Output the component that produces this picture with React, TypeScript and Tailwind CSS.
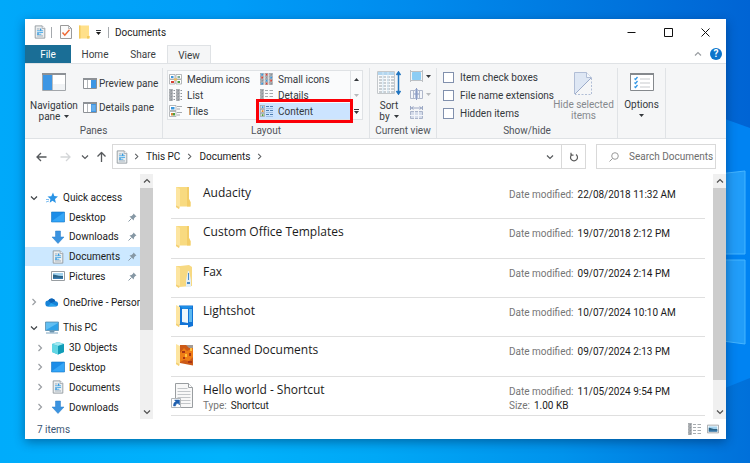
import type { ReactNode } from "react";

type IconProps = { className?: string };

/* ---------- Icons ---------- */

function DocumentIcon({ className = "h-4 w-4" }: IconProps) {
  return (
    <svg viewBox="0 0 16 16" className={className} aria-hidden="true">
      <path d="M2.500 1h8l3 3v11h-11z" fill="#eceff1" stroke="#8f979d" />
      <path d="M10.500 1v3h3" fill="#fff" stroke="#8f979d" strokeWidth=".8" />
      <path d="M4.500 4.500h3M4.500 12.500h7" stroke="#93a5b3" />
      <path d="M4.500 6.500h7M7 8.500h4.500M4.500 10.500h5" stroke="#5ab2ea" strokeWidth="1.200" />
      <path d="M8 4h1.500v2.500H8zM5 8h1.500v3H5z" fill="#3a97d8" />
    </svg>
  );
}

function CheckDocIcon() {
  return (
    <svg viewBox="0 0 12 14" className="h-[14px] w-3" aria-hidden="true">
      <path d="M.5.500h8l3 3v10H.5z" fill="#fbfbfb" stroke="#9a9a9a" />
      <path d="M8.500.500v3h3" fill="none" stroke="#9a9a9a" strokeWidth=".7" />
      <path d="m2.500 7.500 2.300 2.700L9.500 4.800" fill="none" stroke="#ee6a35" strokeWidth="1.500" />
    </svg>
  );
}

function SmallFolderIcon() {
  return (
    <svg viewBox="0 0 12 14" className="h-[14px] w-3" aria-hidden="true">
      <path d="M1 .5h10v10l.8 1-.8 2H1z" fill="#ffe08a" />
      <path d="M1 .5h1.500v13H1zM9 11h2.500v2.500H9z" fill="#f3c95d" />
    </svg>
  );
}

function Caret({ className = "" }: IconProps) {
  return (
    <svg viewBox="0 0 5 3" className={`h-[3px] w-[5px] ${className}`} aria-hidden="true">
      <path d="M0 0h5L2.500 3z" fill="currentColor" />
    </svg>
  );
}

function Chevron({ className = "h-2 w-2" }: IconProps) {
  return (
    <svg viewBox="0 0 8 8" className={className} aria-hidden="true">
      <path d="m2.500 1 3 3-3 3" fill="none" stroke="currentColor" strokeWidth="1.200" />
    </svg>
  );
}

function ArrowIcon({ className = "" }: IconProps) {
  return (
    <svg viewBox="0 0 11 10" className={`h-[10px] w-[11px] ${className}`} aria-hidden="true">
      <path d="M10.500 5H1M5 1 1 5l4 4" fill="none" stroke="currentColor" strokeWidth="1.300" />
    </svg>
  );
}

function PaneIcon({ kind }: { kind: "nav" | "preview" | "details" }) {
  if (kind === "nav") {
    return (
      <svg viewBox="0 0 24 19" className="h-[19px] w-6" aria-hidden="true">
        <path d="M.5.500h23v17H.5z" fill="#fff" stroke="#a2a6aa" />
        <path d="M0 0h24v2H0z" fill="#8d9196" />
        <path d="M1 2h9v15H1z" fill="#3d96e4" />
        <path d="M10 2h1v15h-1z" fill="#b8bcc0" />
        <path d="M11 11h12v6H11z" fill="#f1f3f5" />
      </svg>
    );
  }
  return (
    <svg viewBox="0 0 14 11" className="h-[11px] w-[14px]" aria-hidden="true">
      <path d="M.5.500h13v10H.5z" fill="#fff" stroke="#8d9196" />
      <path d="M0 0h14v2H0z" fill="#8d9196" />
      <path d="M4.500 2v8" stroke="#b4b8bc" />
      <path d="M8 2h5v8H8z" fill="#3d96e4" />
      {kind === "details" && <path d="M8.500 4h4M8.500 6h4M8.500 8h4" stroke="#a7d2f6" strokeWidth=".8" />}
    </svg>
  );
}

type LayoutKind = "medium" | "small" | "list" | "details" | "tiles" | "content";

function LayoutIcon({ kind }: { kind: LayoutKind }) {
  const box = (x: number, y: number, w: number, h: number, c: string) => (
    <g key={`${x}-${y}`}>
      <rect x={x + 0.5} y={y + 0.5} width={w - 1} height={h - 1} fill="#f7f7f7" stroke="#a2a6aa" strokeWidth=".8" />
      <rect x={x + w / 2 - 0.8} y={y + h / 2 - 0.8} width="1.800" height="1.800" fill={c} />
    </g>
  );
  return (
    <svg viewBox="0 0 13 12" className="h-3 w-[13px] shrink-0" aria-hidden="true">
      {kind === "medium" && (
        <>
          <path d="M.5 1.500h5.500v4.500H.5zM7 1.500h5.500v4.500H7zM.5 6.500h5.500v4.500H.5zM7 6.500h5.500v4.500H7z" fill="#fff" stroke="#a2a6aa" strokeWidth=".8" />
          <path d="M2 3h2.500v2H2z" fill="#3a97dd" />
          <path d="M8.500 3h2.500v2H8.500z" fill="#7fae95" />
          <path d="M2 8h3v2H2z" fill="#d94235" />
          <path d="M8.500 8h2.500v2H8.500z" fill="#4f9e3b" />
          <path d="M5 5.500h3v2H5z" fill="#f0bd54" />
        </>
      )}
      {kind === "small" &&
        [0, 3, 6, 9].map((y, r) =>
          [0, 4.5, 9].map((x, c) => box(x, y, 4, 3, ["#3a97dd", "#d94235", "#8c9298"][(r + c) % 3])),
        )}
      {kind === "list" && [0, 3, 6, 9].map((y) => [0, 7].map((x) => box(x, y, 4, 3, "#8c9298")))}
      {kind === "list" && (
        <path
          d="M4.500 1.500h1.500M4.500 4.500h1.500M4.500 7.500h1.500M4.500 10.500h1.500M11.500 1.500H13M11.500 4.500H13M11.500 7.500H13M11.500 10.500H13"
          stroke="#8c9298"
        />
      )}
      {kind === "details" && [0, 3, 6, 9].map((y) => box(0, y, 4, 3, "#8c9298"))}
      {kind === "details" && (
        <path d="M5 1.500h3M9.500 1.500h3.500M5 4.500h3M9.500 4.500h3.500M5 7.500h3M9.500 7.500h3.500M5 10.500h3M9.500 10.500h3.500" stroke="#8f959b" strokeWidth=".8" />
      )}
      {kind === "tiles" && (
        <>
          <path d="M.5.500h6.500v5H.5zM.5 6.500h6.500v5H.5z" fill="#fff" stroke="#a2a6aa" strokeWidth=".8" />
          <path d="M2 2h3.500v2.500H2z" fill="#3a97dd" />
          <path d="M2 8h2v2.500H2z" fill="#d98235" />
          <path d="M4 8h2v2.500H4z" fill="#4f9e3b" />
          <path d="M8 1.500h5M8 4h3M8 7.500h5M8 10h3" stroke="#8f959b" strokeWidth=".8" />
        </>
      )}
      {kind === "content" && (
        <>
          {box(0, 0, 5, 4, "#3a97dd")}
          {box(0, 4, 5, 4, "#e2892c")}
          {box(0, 8, 5, 4, "#4f9e3b")}
          <path d="M6 1.500h3M10 1.500h3M6 5.500h3M10 5.500h3M6 9.500h3M10 9.500h3" stroke="#4d7db0" />
          <path d="M6 3.500h7M6 7.500h7M6 11.500h7" stroke="#8fb1d8" strokeWidth=".7" />
        </>
      )}
    </svg>
  );
}

function SortIcon() {
  return (
    <svg viewBox="0 0 24 24" className="h-6 w-6" aria-hidden="true">
      <path d="M.5.500h17v22H.5z" fill="#f9fafb" stroke="#c4c8cb" />
      <path d="M1 1h16v3H1z" fill="#b3d6ef" />
      <path d="M2 6h15M2 9h15M2 12h15M2 15h15M2 18h15M2 21h15" stroke="#9aa5ad" strokeDasharray="3 1" />
      <path d="M6 1v21M11 1v21" stroke="#d5eaf8" />
      <path d="M21.500 2v20M19.500 4l2-3 2 3M19.500 20l2 3 2-3" fill="none" stroke="#1f74bf" strokeWidth="1.500" />
    </svg>
  );
}

function GroupByIcon() {
  return (
    <svg viewBox="0 0 13 12" className="h-3 w-[13px]" aria-hidden="true">
      <path d="M2.500 2.500h8v7h-8z" fill="#8ccdf5" stroke="#8ccdf5" />
      <path d="M.5 0v12M12.500 0v12M1 1.500h11M1 10.500h11" stroke="#adb2b6" strokeWidth=".8" />
    </svg>
  );
}

function AddColumnsIcon() {
  return (
    <svg viewBox="0 0 13 12" className="h-3 w-[13px]" aria-hidden="true">
      <path d="M.5 2.500h12v8H.5zM3.500 2.500v8M9.500 2.500v8" fill="#f4f6fa" stroke="#b0b8cb" />
      <path d="M5 1h3v10H5z" fill="#b3c0dc" />
      <path d="M6.500 0v12M4 6h5" stroke="#8c9cc4" />
    </svg>
  );
}

function SizeColumnsIcon() {
  return (
    <svg viewBox="0 0 13 13" className="h-[13px] w-[13px]" aria-hidden="true">
      <path d="M.5 0v4M12.500 0v4M1 2h11M3.500.500 1.500 2l2 1.500M9.500.500l2 1.500-2 1.500" fill="none" stroke="#8595b8" strokeWidth=".8" />
      <path d="M.5 5.500h12v7H.5z" fill="#d5dcea" stroke="#aab4ca" />
      <path d="M4.500 5v8M8.500 5v8M0 9.500h13" stroke="#f4f6fa" />
    </svg>
  );
}

function HideItemsIcon() {
  return (
    <svg viewBox="0 0 19 23" className="h-[23px] w-[19px]" aria-hidden="true">
      <path d="M.5.500h12l5 5L.5 22z" fill="#dee7f4" />
      <path d="M.5 22V.5h12l5 5" fill="none" stroke="#b1bed6" />
      <path d="M12.500.500v5h5" fill="#f4f7fb" stroke="#b1bed6" />
      <path d="M17.500 6v16.500H1" fill="none" stroke="#b1bed6" strokeDasharray="2 1.500" />
      <path d="m1 22 16-16" stroke="#9cabc9" />
    </svg>
  );
}

function OptionsIcon() {
  return (
    <svg viewBox="0 0 24 19" className="h-[19px] w-6" aria-hidden="true">
      <path d="M.5.500h23v17H.5z" fill="#fff" stroke="#85898d" />
      <path d="M0 0h24v2H0z" fill="#85898d" />
      <path d="M10 6h10M10 10h10M10 14h10" stroke="#c7cacd" />
      <path d="m4.500 5.500 1 1 2-2.500M4.500 9.500l1 1 2-2.500M4.500 13.500l1 1 2-2.500" fill="none" stroke="#3498e6" strokeWidth="1.300" />
    </svg>
  );
}

function StarIcon() {
  return (
    <svg viewBox="0 0 12 12" className="h-3 w-3" aria-hidden="true">
      <path d="m7 .5 1.300 3.600 3.700.4-3 2.400.9 4L6.500 8.700l-2.800 2 .7-3.600L1.500 4.600l3.800-.4z" fill="#2a94e6" />
      <path d="M0 7.500h3M0 10l3-1" stroke="#7dbdf0" />
    </svg>
  );
}

function DesktopIcon() {
  return (
    <svg viewBox="0 0 14 12" className="h-3 w-[14px]" aria-hidden="true">
      <path d="M.5 1h13v10H.5z" fill="#1c8de8" stroke="#1275c5" strokeWidth=".6" />
      <path d="M1 10 13 1.500V10.500H1z" fill="#35a6f7" />
    </svg>
  );
}

function DownloadIcon() {
  return (
    <svg viewBox="0 0 14 14" className="h-[14px] w-[14px]" aria-hidden="true">
      <path d="M4.500 1h5v6h3.500l-6 6.500L1 7h3.500z" fill="#3a93e0" stroke="#2b7fcb" strokeWidth=".5" />
    </svg>
  );
}

function PictureIcon({ className = "h-[10px] w-[14px]" }: IconProps) {
  return (
    <svg viewBox="0 0 14 10" className={className} aria-hidden="true">
      <path d="M.5.500h13v9H.5z" fill="#fff" stroke="#989da1" />
      <path d="M2 2h10v6H2z" fill="#a4d3ef" />
      <path d="M2 3.500c3 0 5 2 10 1.500v3H2z" fill="#2c6385" />
      <path d="M2 7c3-1 6 0 10-.5V8H2z" fill="#397bb0" />
    </svg>
  );
}

function CloudIcon() {
  return (
    <svg viewBox="0 0 14 10" className="h-[10px] w-[14px]" aria-hidden="true">
      <path d="M3.500 9.500a3 3 0 0 1-.3-6 4 4 0 0 1 7.200.7 2.700 2.700 0 0 1 .8 5.300z" fill="#1683d8" />
      <path d="M3.200 3.500a4 4 0 0 1 7.200.7L6 6z" fill="#0c62b5" />
      <path d="m3 9.500 3-3.500 6 3z" fill="#29a3ed" />
    </svg>
  );
}

function MonitorIcon() {
  return (
    <svg viewBox="0 0 14 13" className="h-[13px] w-[14px]" aria-hidden="true">
      <path d="M.5 1h13v8.500H.5z" fill="#62bff2" stroke="#4c7fa0" strokeWidth=".7" />
      <path d="M1 9 13 2v7z" fill="#2fa2e8" />
      <path d="M5 10h4v1H5zM1 12h12" fill="#6c8595" stroke="#6b97b6" strokeWidth=".9" />
    </svg>
  );
}

function CubeIcon() {
  return (
    <svg viewBox="0 0 14 14" className="h-[14px] w-[14px]" aria-hidden="true">
      <path d="m1 3 6-2 6 2v8l-6 2.500L1 11z" fill="#2bb8d2" />
      <path d="m1 3 6-2 6 2-6 2z" fill="#a1e8f0" />
      <path d="M7 5v8.500L13 11V3z" fill="#119cb7" />
      <path d="m1 3 6 2v8.500L1 11z" fill="#62d6e4" />
    </svg>
  );
}

function PinIcon() {
  return (
    <svg viewBox="0 0 9 9" className="h-[9px] w-[9px]" aria-hidden="true">
      <path d="M5.500.500 8.500 3.500 7.300 4 6 5.500 5.700 7.500 1.500 3.500l2-.4L5 1.700z" fill="#8698a5" />
      <path d="m.5 8.500 3-3" stroke="#8698a5" />
    </svg>
  );
}

type FolderKind = "plain" | "fax" | "lightshot" | "scanned" | "shortcut";

function FileIcon({ kind }: { kind: FolderKind }) {
  if (kind === "shortcut") {
    return (
      <svg viewBox="0 0 24 28" className="h-7 w-6" aria-hidden="true">
        <path d="M4.500.500h13l4 4v20h-17z" fill="#f8f8f8" stroke="#999da0" />
        <path d="M17.500.500v4h4" fill="#fff" stroke="#999da0" />
        <path d="M6.500 5.500h10M6.500 8.500h13M6.500 11.500h13M6.500 14.500h13M6.500 17.500h13M6.500 20.500h13" stroke="#c3c6c9" />
        <path d="M.5 15.500h9v9h-9z" fill="#fff" stroke="#b3b7ba" />
        <path d="M2.500 23c0-3 1-4 2.500-4.500L3.500 17h5v5L7 20.300C5.500 20.500 4.500 21.500 4.500 23z" fill="#1f5fae" stroke="#1f5fae" strokeWidth=".5" />
      </svg>
    );
  }
  return (
    <svg viewBox="0 0 24 24" className="h-6 w-6" aria-hidden="true">
      {(kind === "plain" || kind === "fax") && (
        <>
          <path d="M5 1h13v12l1.500 3v4.500H7z" fill="#f8da80" />
          <path d="M16 1h2v12l1.500 3v4.500H16z" fill="#f3cd68" />
        </>
      )}
      {kind === "fax" && (
        <>
          <path d="M5 1.500 18 0l3 2v19l-13 1z" fill="#f7d982" />
          <path d="M17 6h1l2 9v7h-5v-7z" fill="#e3eef5" />
          <path d="M17 8h1v7h-1zM16 17h3v2h-3z" fill="#4c8bc6" />
        </>
      )}
      {kind === "lightshot" && (
        <>
          <path d="M8 1.500h14V22l-5 1.500V21H8z" fill="#1173d6" />
          <path d="M11 5h6v14l-6-1z" fill="#eef6fb" />
          <path d="M18 5h3v13h-3z" fill="#5cb8f0" />
          <path d="M9 2h12v2l-9 1z" fill="#1e8ee6" />
        </>
      )}
      {kind === "scanned" && (
        <>
          <path d="M9 2h13v20.500L9 20z" fill="#cc5a17" />
          <path d="m9 10 4-5 3 3 6-3v9l-4 4-5-1-4 2z" fill="#ef7d16" />
          <path d="M11 8h3v2h-3zM18 10h2v3h-2zM12 14h2v2h-2zM17 18h4v2h-4z" fill="#a83416" />
          <path d="M14 11h2v3h-2zM19 5h2v3h-2z" fill="#ffc13e" />
          <path d="M15 2h7v3h-4z" fill="#a39a94" />
        </>
      )}
      <path d="M5 1 9 3v16.500L8 23l-3-2z" fill="#fde5a0" />
      <path d="M5 19.500 8.500 21 8 23l-3-2z" fill="#f3cf73" />
    </svg>
  );
}

/* ---------- Desktop wallpaper ---------- */

function Wallpaper() {
  return (
    <svg viewBox="0 0 750 463" preserveAspectRatio="none" className="absolute inset-0 h-full w-full" aria-hidden="true">
      <defs>
        <linearGradient id="sky" x1="0" x2="1" y1="0" y2="0">
          <stop offset="0" stopColor="#00a9fa" />
          <stop offset=".3" stopColor="#009df8" />
          <stop offset=".55" stopColor="#008bed" />
          <stop offset=".8" stopColor="#0076de" />
          <stop offset="1" stopColor="#0064d4" />
        </linearGradient>
        <linearGradient id="floor" x1="0" x2="1" y1="0" y2="0">
          <stop offset="0" stopColor="#00acfb" />
          <stop offset=".3" stopColor="#00b2fc" />
          <stop offset=".5" stopColor="#00a8f6" />
          <stop offset=".75" stopColor="#0093ec" />
          <stop offset="1" stopColor="#0070da" />
        </linearGradient>
      </defs>
      <path d="M0 0h750v463H0z" fill="url(#sky)" />
      <path d="M0 240h750v223H0z" fill="url(#floor)" />
      <path d="M700 110l50 18v250l-50 20z" fill="#0083f2" />
      <path d="M700 176l45-5v83h-45zM700 260h45v84l-45-6z" fill="#219df9" stroke="#45b5ff" />
    </svg>
  );
}

/* ---------- Ribbon ---------- */

function RibbonGroup({ label, className, children }: { label: string; className: string; children?: ReactNode }) {
  return (
    <section className={`flex shrink-0 flex-col border-r border-[#e0e3e6] ${className}`}>
      <div className="flex flex-1">{children}</div>
      <h2 className="h-[14px] text-center leading-[14px] text-[#50545a]">{label}</h2>
    </section>
  );
}

const layouts: { kind: LayoutKind; label: string }[] = [
  { kind: "medium", label: "Medium icons" },
  { kind: "small", label: "Small icons" },
  { kind: "list", label: "List" },
  { kind: "details", label: "Details" },
  { kind: "tiles", label: "Tiles" },
  { kind: "content", label: "Content" },
];

const toggles = ["Item check boxes", "File name extensions", "Hidden items"];

function Ribbon() {
  return (
    <div className="flex h-[76px] border-y border-[#dfe2e5] bg-[#f5f6f7] pt-1">
      <RibbonGroup label="Panes" className="w-[138px]">
        <button className="flex w-[58px] flex-col items-center pt-[5px] leading-[11px]">
          <PaneIcon kind="nav" />
          <span className="pt-2">Navigation</span>
          <span className="flex items-center gap-1">
            pane <Caret />
          </span>
        </button>
        <div className="flex flex-col gap-[10px] pt-2">
          <button className="flex h-[14px] items-center gap-[2px]">
            <PaneIcon kind="preview" /> Preview pane
          </button>
          <button className="flex h-[14px] items-center gap-[2px]">
            <PaneIcon kind="details" /> Details pane
          </button>
        </div>
      </RibbonGroup>

      <RibbonGroup label="Layout" className="w-[207px]">
        <div className="mt-[2px] ml-1 flex h-[50px] border border-[#dfe2e5] bg-[#fafbfc]">
          <div className="grid w-[182px] grid-cols-2">
            {layouts.map(({ kind, label }) => {
              const active = kind === "content";
              return (
                <button
                  key={kind}
                  aria-pressed={active}
                  className={`relative flex h-4 items-center gap-[5px] pl-px ${active ? "bg-[#cce4ff]" : ""}`}
                >
                  <LayoutIcon kind={kind} />
                  {label}
                  {active && <span className="pointer-events-none absolute -inset-x-[3px] -inset-y-1 border-3 border-[#fb0007]" />}
                </button>
              );
            })}
          </div>
          <div className="flex w-3 flex-col border-l border-[#dfe2e5]">
            <button aria-label="Scroll up" className="flex h-4 items-center justify-center">
              <Caret className="rotate-180" />
            </button>
            <button aria-label="Scroll down" className="flex h-4 items-center justify-center text-[#b7babd]">
              <Caret />
            </button>
            <button aria-label="More layouts" className="flex h-4 flex-col items-center justify-center gap-px">
              <span className="h-px w-[5px] bg-[#34383c]" />
              <Caret />
            </button>
          </div>
        </div>
      </RibbonGroup>

      <RibbonGroup label="Current view" className="w-[67px]">
        <button className="flex w-[38px] flex-col items-center pt-[3px] leading-[11px]">
          <SortIcon />
          <span className="pt-[5px]">Sort</span>
          <span className="flex items-center gap-1">
            by <Caret />
          </span>
        </button>
        <div className="flex flex-col gap-[6px] pt-[2px] pl-[2px]">
          <button aria-label="Group by" className="flex items-center gap-[3px]">
            <GroupByIcon /> <Caret />
          </button>
          <button aria-label="Add columns" className="flex items-center gap-[3px] text-[#b7babd]">
            <AddColumnsIcon /> <Caret />
          </button>
          <button aria-label="Size all columns to fit">
            <SizeColumnsIcon />
          </button>
        </div>
      </RibbonGroup>

      <RibbonGroup label="Show/hide" className="w-[181px]">
        <div className="flex w-[113px] shrink-0 flex-col gap-1 pt-[2px] pl-[6px]">
          {toggles.map((label) => (
            <label key={label} className="flex h-[14px] items-center gap-[6px] whitespace-nowrap">
              <input
                type="checkbox"
                className="h-[11px] w-[11px] shrink-0 appearance-none border border-[#8190ad] bg-white checked:bg-[#2a94e6]"
              />
              {label}
            </label>
          ))}
        </div>
        <button className="flex flex-1 flex-col items-center pt-1 leading-[11px] text-[#85898e]">
          <HideItemsIcon />
          <span className="pt-1 whitespace-nowrap">Hide selected</span>
          <span>items</span>
        </button>
      </RibbonGroup>

      <RibbonGroup label="" className="w-[48px]">
        <button className="flex flex-1 flex-col items-center pt-[5px] leading-[11px]">
          <OptionsIcon />
          <span className="pt-[7px]">Options</span>
          <Caret className="mt-1" />
        </button>
      </RibbonGroup>
    </div>
  );
}

/* ---------- Navigation ---------- */

type NavItem = { label: string; icon: ReactNode; pinned?: boolean; selected?: boolean };

const quickAccess: NavItem[] = [
  { label: "Desktop", icon: <DesktopIcon />, pinned: true },
  { label: "Downloads", icon: <DownloadIcon />, pinned: true },
  { label: "Documents", icon: <DocumentIcon className="h-[14px] w-[14px]" />, pinned: true, selected: true },
  { label: "Pictures", icon: <PictureIcon />, pinned: true },
];

const thisPc: NavItem[] = [
  { label: "3D Objects", icon: <CubeIcon /> },
  { label: "Desktop", icon: <DesktopIcon /> },
  { label: "Documents", icon: <DocumentIcon className="h-[14px] w-[14px]" /> },
  { label: "Downloads", icon: <DownloadIcon /> },
];

function TreeRoot({ label, icon, open = false }: { label: string; icon: ReactNode; open?: boolean }) {
  return (
    <button className="flex items-center overflow-hidden pl-[5px] text-left whitespace-nowrap">
      <Chevron className={`h-2 w-2 shrink-0 ${open ? "rotate-90 text-[#3e4246]" : "text-[#9a9ea2]"}`} />
      <span className="ml-[7px] flex w-[14px] shrink-0 justify-center">{icon}</span>
      <span className="ml-1">{label}</span>
    </button>
  );
}

function TreeChild({ item }: { item: NavItem }) {
  return (
    <button className={`flex items-center pl-[11px] text-left ${item.selected ? "bg-[#cce8ff]" : ""}`}>
      <span className="w-2">{!item.pinned && <Chevron className="h-2 w-2 text-[#9a9ea2]" />}</span>
      <span className="ml-[7px] flex w-[14px] justify-center">{item.icon}</span>
      <span className="ml-1 flex-1">{item.label}</span>
      {item.pinned && (
        <span className="pr-[3px]">
          <PinIcon />
        </span>
      )}
    </button>
  );
}

function ScrollBar({ thumb }: { thumb: string }) {
  return (
    <div className="flex w-[13px] shrink-0 flex-col bg-[#f0f0f0] text-[#505050]">
      <button aria-label="Scroll up" className="flex h-[14px] items-center justify-center">
        <Chevron className="h-2 w-2 -rotate-90" />
      </button>
      <div className={`bg-[#cdcdcd] ${thumb}`} />
      <button aria-label="Scroll down" className="mt-auto flex h-[14px] items-center justify-center">
        <Chevron className="h-2 w-2 rotate-90" />
      </button>
    </div>
  );
}

function NavigationPane() {
  return (
    <nav className="flex w-[128px] shrink-0">
      <div className="w-[115px] overflow-hidden pt-[14px]">
        <div className="grid h-[98px] auto-rows-fr">
          <TreeRoot label="Quick access" icon={<StarIcon />} open />
          {quickAccess.map((item) => (
            <TreeChild key={item.label} item={item} />
          ))}
        </div>
        <div className="my-[6px] grid h-5">
          <TreeRoot label="OneDrive - Personal" icon={<CloudIcon />} />
        </div>
        <div className="grid h-[99px] auto-rows-fr">
          <TreeRoot label="This PC" icon={<MonitorIcon />} open />
          {thisPc.map((item) => (
            <TreeChild key={item.label} item={item} />
          ))}
        </div>
      </div>
      <ScrollBar thumb="h-[142px]" />
    </nav>
  );
}

/* ---------- File list ---------- */

type FileEntry = { name: string; kind: FolderKind; modified: string; type?: string; size?: string };

const files: FileEntry[] = [
  { name: "Audacity", kind: "plain", modified: "22/08/2018 11:32 AM" },
  { name: "Custom Office Templates", kind: "plain", modified: "19/07/2018 2:12 PM" },
  { name: "Fax", kind: "fax", modified: "09/07/2024 2:14 PM" },
  { name: "Lightshot", kind: "lightshot", modified: "10/07/2024 10:10 AM" },
  { name: "Scanned Documents", kind: "scanned", modified: "09/07/2024 2:13 PM" },
  { name: "Hello world - Shortcut", kind: "shortcut", modified: "11/05/2024 9:54 PM", type: "Shortcut", size: "1.00 KB" },
];

function Detail({ label, value }: { label: string; value: string }) {
  return (
    <p className="flex gap-1 whitespace-nowrap">
      <span className="text-[#757575]">{label}:</span>
      <span>{value}</span>
    </p>
  );
}

function FileList() {
  return (
    <main className="flex min-w-0 flex-1">
      <ul className="mt-[6px] mr-2 ml-[18px] grid h-[236px] min-w-0 flex-1 auto-rows-fr">
        {files.map((file) => (
          <li key={file.name} className="flex border-b border-[#dfdfdf] leading-[14px]">
            <span className="w-8 shrink-0 pt-[6px]">
              <FileIcon kind={file.kind} />
            </span>
            <div className="min-w-0 flex-1 pt-1">
              <a href="#" className="block font-['Open_Sans','Noto_Sans',sans-serif] text-[12px] leading-[18px]">
                {file.name}
              </a>
              {file.type && <Detail label="Type" value={file.type} />}
            </div>
            <div className="w-[196px] shrink-0 pt-2">
              <Detail label="Date modified" value={file.modified} />
              {file.size && <Detail label="Size" value={file.size} />}
            </div>
          </li>
        ))}
      </ul>
      <ScrollBar thumb="h-[192px]" />
    </main>
  );
}

/* ---------- Window ---------- */

function TitleBar() {
  return (
    <header className="flex h-[26px] items-center pl-2">
      <DocumentIcon className="h-[14px] w-[14px]" />
      <span className="ml-1 h-[11px] w-px bg-[#a5a9ad]" />
      <button aria-label="Properties" className="ml-2">
        <CheckDocIcon />
      </button>
      <button aria-label="New folder" className="ml-[6px]">
        <SmallFolderIcon />
      </button>
      <button aria-label="Customize toolbar" className="ml-[6px] flex flex-col gap-px">
        <span className="h-px w-[5px] bg-[#34383c]" />
        <Caret />
      </button>
      <span className="ml-[7px] h-[11px] w-px bg-[#a5a9ad]" />
      <h1 className="ml-[6px]">Documents</h1>
      <div className="mr-4 ml-auto flex items-center gap-7">
        <button aria-label="Minimize">
          <svg viewBox="0 0 9 9" className="h-[9px] w-[9px]">
            <path d="M.5 4.500h8" stroke="#111" />
          </svg>
        </button>
        <button aria-label="Maximize">
          <svg viewBox="0 0 9 9" className="h-[9px] w-[9px]">
            <path d="M.5.500h8v8h-8z" fill="none" stroke="#111" />
          </svg>
        </button>
        <button aria-label="Close">
          <svg viewBox="0 0 9 9" className="h-[9px] w-[9px]">
            <path d="m.5.500 8 8m0-8-8 8" stroke="#111" />
          </svg>
        </button>
      </div>
    </header>
  );
}

function TabBar() {
  return (
    <div className="flex h-[18px] items-stretch text-center text-[#3a3e42]">
      <button className="w-[46px] bg-[#1a6e96] text-white">File</button>
      <button className="w-[48px]">Home</button>
      <button className="w-[48px]">Share</button>
      <button className="-mb-px w-[44px] border border-b-0 border-[#dfe2e5] bg-[#f5f6f7]">View</button>
      <button aria-label="Collapse ribbon" className="ml-auto text-[#9a9ea2]">
        <Chevron className="h-2 w-2 -rotate-90" />
      </button>
      <button
        aria-label="Help"
        className="mr-1 ml-2 h-3 w-3 self-center rounded-full bg-[#0b74cb] leading-3 font-bold text-white"
      >
        ?
      </button>
    </div>
  );
}

function AddressBar() {
  return (
    <div className="flex h-[35px] items-center pr-[10px] pl-[11px] text-[#56595c]">
      <button aria-label="Back">
        <ArrowIcon />
      </button>
      <button aria-label="Forward" className="ml-[13px] text-[#d4d6d8]">
        <ArrowIcon className="rotate-180" />
      </button>
      <button aria-label="Recent locations" className="ml-[10px]">
        <Chevron className="h-2 w-2 rotate-90" />
      </button>
      <button aria-label="Up" className="ml-[7px]">
        <ArrowIcon className="rotate-90" />
      </button>
      <div className="ml-[5px] flex h-[25px] min-w-0 flex-1 items-center border border-[#d9d9d9] text-[#1b1b1b]">
        <span className="ml-[2px]">
          <DocumentIcon className="h-[14px] w-[14px]" />
        </span>
        <Chevron className="ml-1 h-[7px] w-[7px] text-[#56595c]" />
        <button className="ml-[6px]">This PC</button>
        <Chevron className="ml-[6px] h-[7px] w-[7px] text-[#56595c]" />
        <button className="ml-[6px]">Documents</button>
        <Chevron className="ml-[6px] h-[7px] w-[7px] text-[#56595c]" />
        <button
          aria-label="Previous locations"
          className="ml-auto flex h-full w-6 items-center justify-center border-r border-[#d9d9d9] text-[#56595c]"
        >
          <Chevron className="h-2 w-2 rotate-90" />
        </button>
        <button aria-label="Refresh" className="flex w-[23px] justify-center">
          <svg viewBox="0 0 10 10" className="h-[10px] w-[10px]">
            <path d="M3 2.500a3.500 3.500 0 1 0 4 0M2 .8v2.400h2.500" fill="none" stroke="#5a5a5a" strokeWidth="1.200" />
          </svg>
        </button>
      </div>
      <label className="ml-[10px] flex h-[25px] w-[120px] items-center border border-[#d9d9d9] pl-3">
        <svg viewBox="0 0 10 10" className="h-[10px] w-[10px] shrink-0" aria-hidden="true">
          <circle cx="6" cy="4" r="3.300" fill="none" stroke="#9a9a9a" />
          <path d="M3.500 6.500.5 9.500" stroke="#9a9a9a" />
        </svg>
        <input
          type="text"
          aria-label="Search Documents"
          placeholder="Search Documents"
          className="ml-[10px] w-0 flex-1 bg-transparent outline-none placeholder:text-[#6d6d6d]"
        />
      </label>
    </div>
  );
}

function StatusBar() {
  return (
    <footer className="flex h-5 items-center pr-[7px] pl-3 text-[#3b5573]">
      <span className="flex-1">7 items</span>
      <button aria-label="Details view">
        <LayoutIcon kind="details" />
      </button>
      <button aria-label="Large thumbnails" className="ml-[6px]">
        <PictureIcon className="h-[10px] w-3" />
      </button>
    </footer>
  );
}

export default function App() {
  return (
    <div className="relative isolate flex min-h-screen bg-[#0090ef] pt-[19px] pr-6 pb-6 pl-[25px] font-[Roboto,'Noto_Sans',sans-serif] text-[10px] text-[#1b1b1b]">
      <Wallpaper />
      <div className="relative flex min-w-0 flex-1 flex-col bg-white shadow-[0_3px_10px_rgba(0,30,70,0.45)]">
        <TitleBar />
        <TabBar />
        <div className="text-[#34383c]">
          <Ribbon />
        </div>
        <AddressBar />
        <div className="flex min-h-[245px] flex-1">
          <NavigationPane />
          <FileList />
        </div>
        <StatusBar />
      </div>
    </div>
  );
}
